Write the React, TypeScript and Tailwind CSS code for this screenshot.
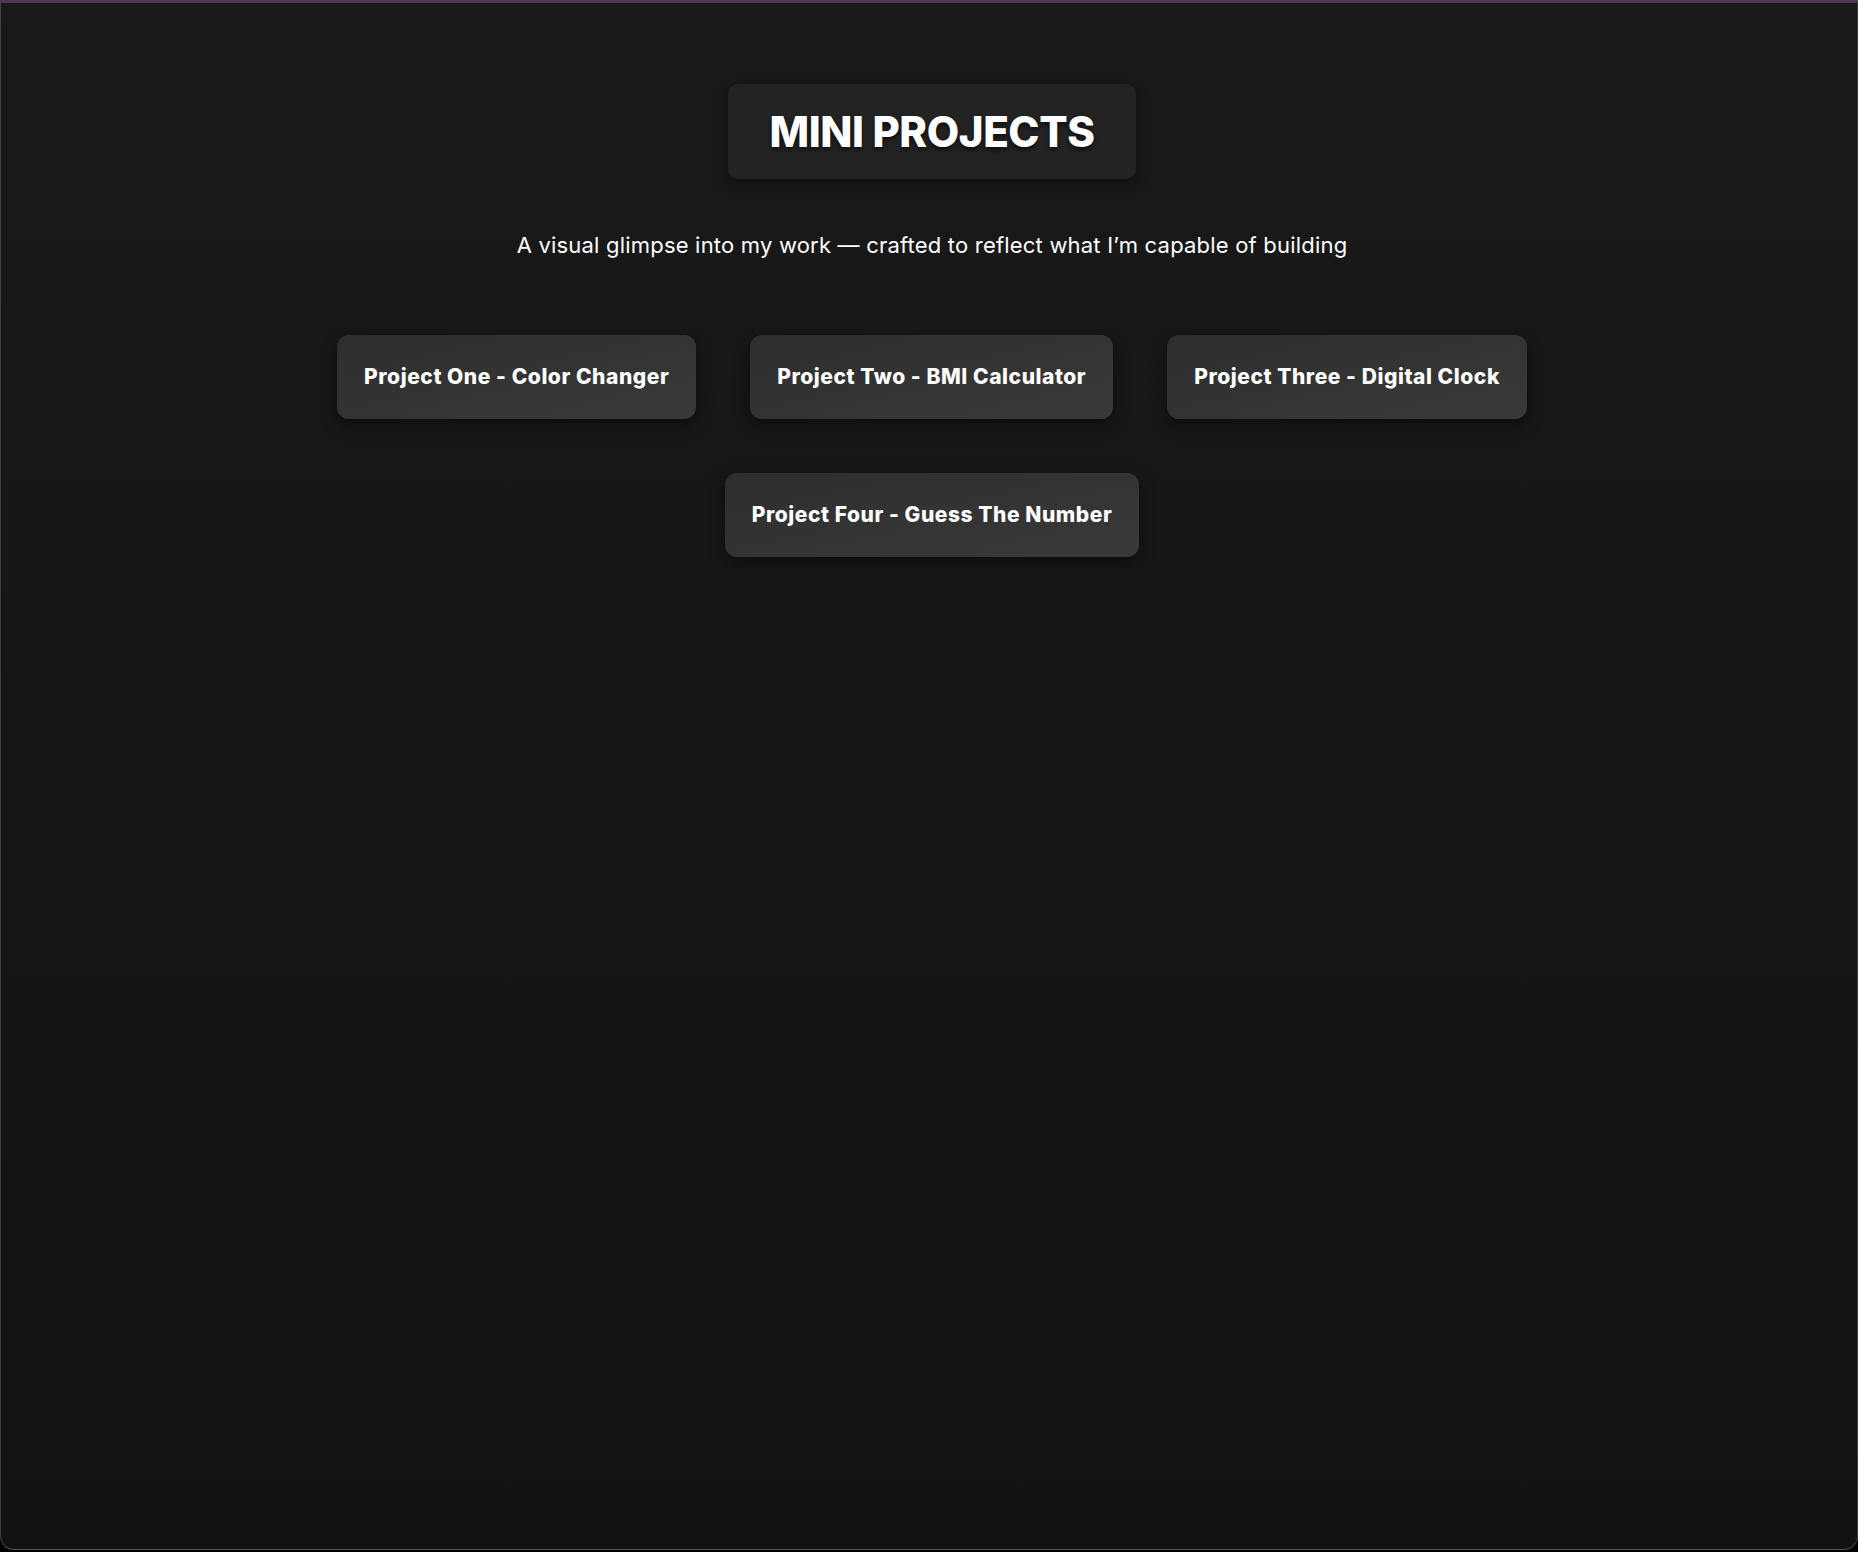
import React from "react";

const projects = [
  "Project One - Color Changer",
  "Project Two - BMI Calculator",
  "Project Three - Digital Clock",
  "Project Four - Guess The Number",
];

export default function App() {
  return (
    <div className="h-[1552px] w-full bg-black" style={{ fontFamily: "Inter, 'Noto Sans', sans-serif" }}>
      <div className="h-[1550px] w-full rounded-b-[14px] border-x border-b border-x-[#3e3e3e] border-b-[#555555] border-t-[3px] border-t-[#4a3b4a] bg-gradient-to-b from-[#191919] to-[#121212]">
        <div className="flex flex-col items-center pl-[6px] pt-[81px]">
          <div className="flex h-[95px] items-center rounded-[10px] bg-[#232323] px-[42px] shadow-[0_4px_14px_rgba(0,0,0,0.35)]">
            <h1 className="text-[42px] font-extrabold leading-none tracking-[-0.01em] text-white [text-shadow:0_3px_5px_rgba(0,0,0,0.6)]">
              MINI PROJECTS
            </h1>
          </div>
          <p className="mt-[51px] text-[22px] leading-[30px] tracking-[0.2px] text-white">
            A visual glimpse into my work — crafted to reflect what I’m capable of building
          </p>
          <div className="mt-[75px] flex max-w-[1260px] flex-wrap justify-center gap-[54px]">
            {projects.map((p) => (
              <button
                key={p}
                className="flex h-[84px] items-center rounded-[12px] bg-gradient-to-br from-[#2e2e2e] to-[#393939] px-[27px] text-[21px] font-extrabold tracking-[0.55px] text-white shadow-[0_6px_16px_rgba(0,0,0,0.45)]"
              >
                {p}
              </button>
            ))}
          </div>
        </div>
      </div>
    </div>
  );
}
